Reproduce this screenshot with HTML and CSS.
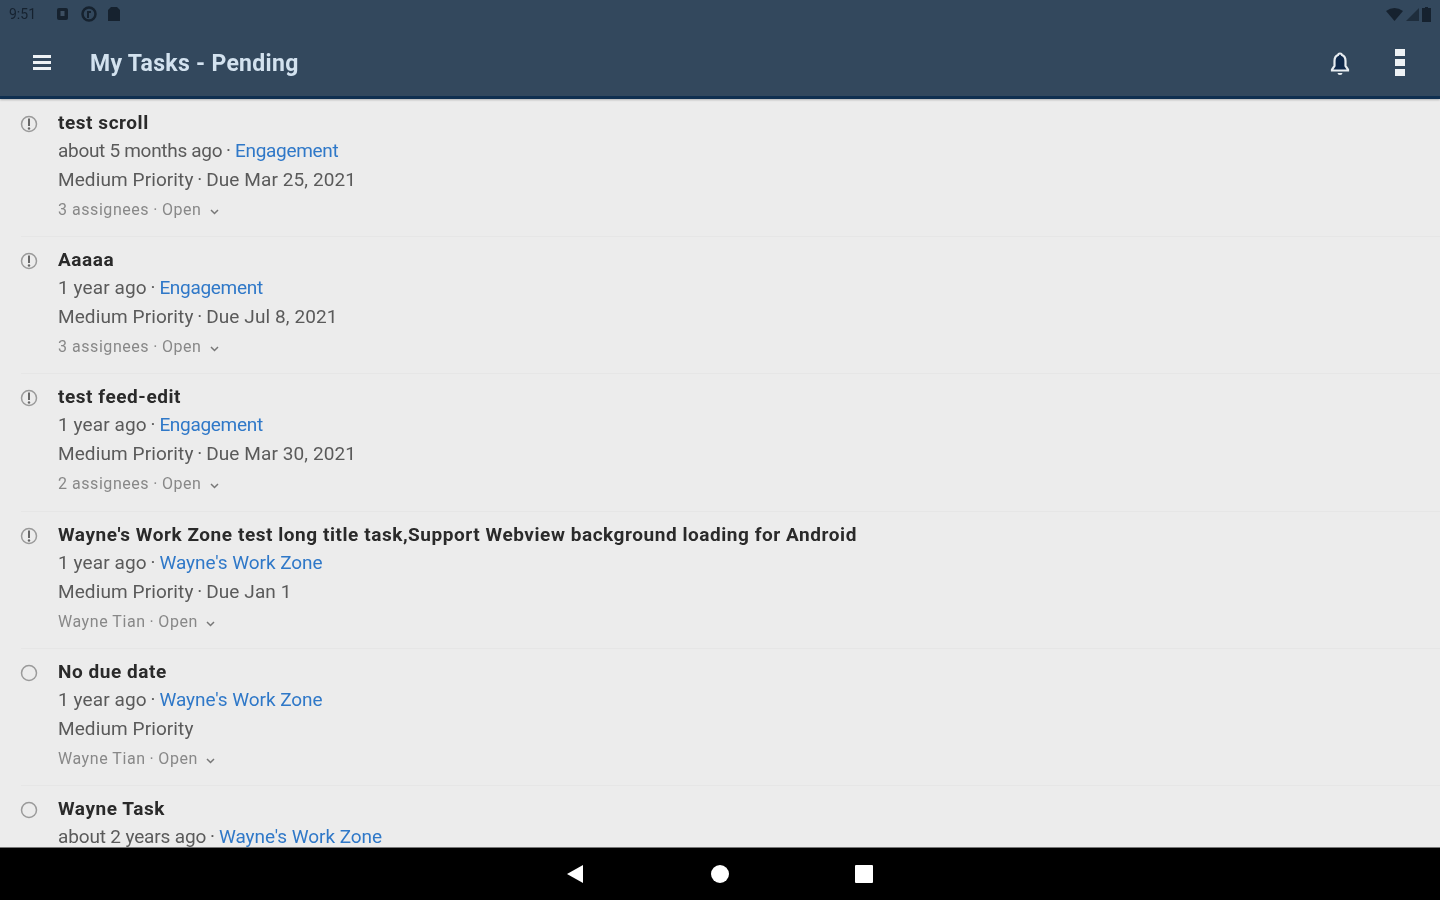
FILE: index.html
```html
<!DOCTYPE html>
<html lang="en">
<head>
<meta charset="utf-8">
<title>My Tasks - Pending</title>
<link rel="stylesheet" href="styles.css">
</head>
<body>
<div class="screen">
  <header class="appbar">
    <div class="status">
      <div class="status-left">
        <span class="time">9:51</span>
        <svg class="si" width="16" height="16" viewBox="0 0 16 16"><rect x="2" y="2" width="11" height="12" rx="2" fill="#16222f"/><rect x="5.500" y="5" width="4" height="5" fill="#3d4f62"/></svg>
        <svg class="si" width="18" height="18" viewBox="0 0 18 18"><circle cx="9" cy="9" r="6.500" fill="none" stroke="#16222f" stroke-width="2.500"/><path d="M7 13V6h4v2H9v5z" fill="#16222f"/></svg>
        <svg class="si" width="14" height="16" viewBox="0 0 14 16"><path d="M4 1h6l3 3v11H1V4z" fill="#16222f"/></svg>
      </div>
      <div class="status-right">
        <svg width="17" height="13" viewBox="0 0 17 13"><path d="M0 3Q8.500-3 17 3L8.500 13z" fill="#16222f"/></svg>
        <svg width="13" height="13" viewBox="0 0 13 13"><path d="M13 0v13H0z" fill="#16222f" opacity=".7"/></svg>
        <svg width="9" height="15" viewBox="0 0 9 15"><path d="M3 0h3v1h3v14H0V1h3z" fill="#16222f"/></svg>
      </div>
    </div>
    <div class="toolbar">
      <svg class="menu" width="18" height="15" viewBox="0 0 18 15"><path d="M0 0h18v3H0zM0 6h18v3H0zM0 12h18v3H0z" fill="#eef2f5"/></svg>
      <h1 class="title">My Tasks - Pending</h1>
      <svg class="bell" width="24" height="26" viewBox="0 0 24 26"><path d="M12 3.500a2 2 0 0 1 2 1.500c2.500 1 3.500 3 3.500 6V16l2.500 3.500V20.500H4v-1L6.500 16v-5c0-3 1-5 3.500-6a2 2 0 0 1 2-1.500z" fill="#10294a" stroke="#e8edf1" stroke-width="2.200"/><path d="M9.500 23h5a2.500 2 0 0 1-5 0z" fill="#e8edf1"/></svg>
      <div class="dots"><i></i><i></i><i></i></div>
    </div>
  </header>
  <main class="list">
    <article class="task">
      <svg class="st" width="18" height="18" viewBox="0 0 18 18"><circle cx="9" cy="9" r="7.500" fill="none" stroke="#9a9a9a" stroke-width="1.500"/><path d="M9 3.500v7.500" stroke="#666" stroke-width="2"/><circle cx="9" cy="13.500" r="1.200" fill="#666"/></svg>
      <div class="body">
        <div class="name">test scroll</div>
        <div class="line"><span class="age-long">about 5 months ago</span><span class="sep"> · </span><a class="link eng">Engagement</a></div>
        <div class="line">Medium Priority<span class="sep"> · </span>Due Mar 25, 2021</div>
        <div class="meta">3 assignees<span class="sep"> · </span>Open <svg class="caret" width="9" height="6" viewBox="0 0 9 6"><path d="M1 1l3.500 3.500L8 1" fill="none" stroke="#777" stroke-width="1.500"/></svg></div>
      </div>
    </article>
    <article class="task">
      <svg class="st" width="18" height="18" viewBox="0 0 18 18"><circle cx="9" cy="9" r="7.500" fill="none" stroke="#9a9a9a" stroke-width="1.500"/><path d="M9 3.500v7.500" stroke="#666" stroke-width="2"/><circle cx="9" cy="13.500" r="1.200" fill="#666"/></svg>
      <div class="body">
        <div class="name">Aaaaa</div>
        <div class="line">1 year ago<span class="sep"> · </span><a class="link eng">Engagement</a></div>
        <div class="line">Medium Priority<span class="sep"> · </span>Due Jul 8, 2021</div>
        <div class="meta">3 assignees<span class="sep"> · </span>Open <svg class="caret" width="9" height="6" viewBox="0 0 9 6"><path d="M1 1l3.500 3.500L8 1" fill="none" stroke="#777" stroke-width="1.500"/></svg></div>
      </div>
    </article>
    <article class="task">
      <svg class="st" width="18" height="18" viewBox="0 0 18 18"><circle cx="9" cy="9" r="7.500" fill="none" stroke="#9a9a9a" stroke-width="1.500"/><path d="M9 3.500v7.500" stroke="#666" stroke-width="2"/><circle cx="9" cy="13.500" r="1.200" fill="#666"/></svg>
      <div class="body">
        <div class="name">test feed-edit</div>
        <div class="line">1 year ago<span class="sep"> · </span><a class="link eng">Engagement</a></div>
        <div class="line">Medium Priority<span class="sep"> · </span>Due Mar 30, 2021</div>
        <div class="meta">2 assignees<span class="sep"> · </span>Open <svg class="caret" width="9" height="6" viewBox="0 0 9 6"><path d="M1 1l3.500 3.500L8 1" fill="none" stroke="#777" stroke-width="1.500"/></svg></div>
      </div>
    </article>
    <article class="task">
      <svg class="st" width="18" height="18" viewBox="0 0 18 18"><circle cx="9" cy="9" r="7.500" fill="none" stroke="#9a9a9a" stroke-width="1.500"/><path d="M9 3.500v7.500" stroke="#666" stroke-width="2"/><circle cx="9" cy="13.500" r="1.200" fill="#666"/></svg>
      <div class="body">
        <div class="name">Wayne's Work Zone test long title task,Support Webview background loading for Android</div>
        <div class="line">1 year ago<span class="sep"> · </span><a class="link">Wayne's Work Zone</a></div>
        <div class="line">Medium Priority<span class="sep"> · </span>Due Jan 1</div>
        <div class="meta">Wayne Tian<span class="sep"> · </span>Open <svg class="caret" width="9" height="6" viewBox="0 0 9 6"><path d="M1 1l3.500 3.500L8 1" fill="none" stroke="#777" stroke-width="1.500"/></svg></div>
      </div>
    </article>
    <article class="task">
      <svg class="st" width="18" height="18" viewBox="0 0 18 18"><circle cx="9" cy="9" r="7.500" fill="none" stroke="#9a9a9a" stroke-width="1.500"/></svg>
      <div class="body">
        <div class="name">No due date</div>
        <div class="line">1 year ago<span class="sep"> · </span><a class="link">Wayne's Work Zone</a></div>
        <div class="line">Medium Priority</div>
        <div class="meta">Wayne Tian<span class="sep"> · </span>Open <svg class="caret" width="9" height="6" viewBox="0 0 9 6"><path d="M1 1l3.500 3.500L8 1" fill="none" stroke="#777" stroke-width="1.500"/></svg></div>
      </div>
    </article>
    <article class="task">
      <svg class="st" width="18" height="18" viewBox="0 0 18 18"><circle cx="9" cy="9" r="7.500" fill="none" stroke="#9a9a9a" stroke-width="1.500"/></svg>
      <div class="body">
        <div class="name">Wayne Task</div>
        <div class="line"><span class="age-mid">about 2 years ago</span><span class="sep"> · </span><a class="link">Wayne's Work Zone</a></div>
      </div>
    </article>
  </main>
  <footer class="navbar">
    <svg width="18" height="20" viewBox="0 0 18 20"><path d="M0 10 16 1v18z" fill="#fff"/></svg>
    <svg width="18" height="18" viewBox="0 0 18 18"><circle cx="9" cy="9" r="9" fill="#fff"/></svg>
    <svg width="18" height="18" viewBox="0 0 18 18"><rect width="18" height="18" rx="1" fill="#fff"/></svg>
  </footer>
</div>
</body>
</html>
```
FILE: styles.css
```css
* { box-sizing: border-box; }
html, body { margin: 0; height: 100%; overflow: hidden; }
body { font-family: Roboto, "Noto Sans", sans-serif; }
.screen { width: 1440px; height: 900px; display: flex; flex-direction: column; background: #ececec; }
.appbar { height: 99px; flex: none; background: #33485d; border-bottom: 3px solid #0f2f50; box-shadow: 0 1px 2px rgba(0,0,0,.25); position: relative; }
.status { height: 28px; display: flex; justify-content: space-between; align-items: center; padding: 0 9px; filter: blur(.6px); }
.status-left, .status-right { display: flex; align-items: center; }
.status-left { gap: 9px; }
.status-right { gap: 3px; }
.time { font-size: 14px; color: #16222f; width: 37px; }
.toolbar { height: 68px; display: flex; align-items: center; padding-left: 33px; filter: blur(.5px); }
.menu { flex: none; }
.title { margin: 3px 0 0 39px; font-size: 23px; font-weight: 700; letter-spacing: .3px; color: #d3e2ef; flex: 1; }
.bell { margin: 1px 43px 0 0; }
.dots { width: 10px; margin: 1px 35px 0 0; display: flex; flex-direction: column; gap: 3px; }
.dots i { display: block; height: 7px; background: #eef2f5; }
.list { flex: 1; overflow: hidden; min-height: 0; }
.task { height: 137.200px; display: flex; padding: 9px 0 0 20px; position: relative; }
.task + .task::before { content: ""; position: absolute; left: 21px; right: 0; top: 0; border-top: 1px solid #e6e6e6; }
.st { margin-top: 7px; flex: none; filter: blur(.4px); }
.body { margin-left: 20px; filter: blur(.5px); }
.name { height: 28px; line-height: 30px; font-size: 19px; font-weight: 700; letter-spacing: .55px; color: #2a2a2a; }
.line { height: 29px; line-height: 29px; font-size: 19px; letter-spacing: .1px; color: #5a5a5a; }
.age-long { letter-spacing: -.3px; }
.age-mid { letter-spacing: -.15px; }
.sep { margin: 0 -1px; }
.link { color: #2f78c8; letter-spacing: -.05px; }
.link.eng { letter-spacing: -.3px; }
.meta { height: 30px; line-height: 32px; font-size: 16px; letter-spacing: .55px; color: #888; }
.meta .sep { margin: 0 -.5px; }
.caret { margin-left: 4px; vertical-align: 0; }
.navbar { height: 53px; flex: none; background: #000; display: grid; grid-template-columns: repeat(3, 144px); justify-content: center; justify-items: center; align-items: center; position: relative; border-top: 1px solid #777; }
```
